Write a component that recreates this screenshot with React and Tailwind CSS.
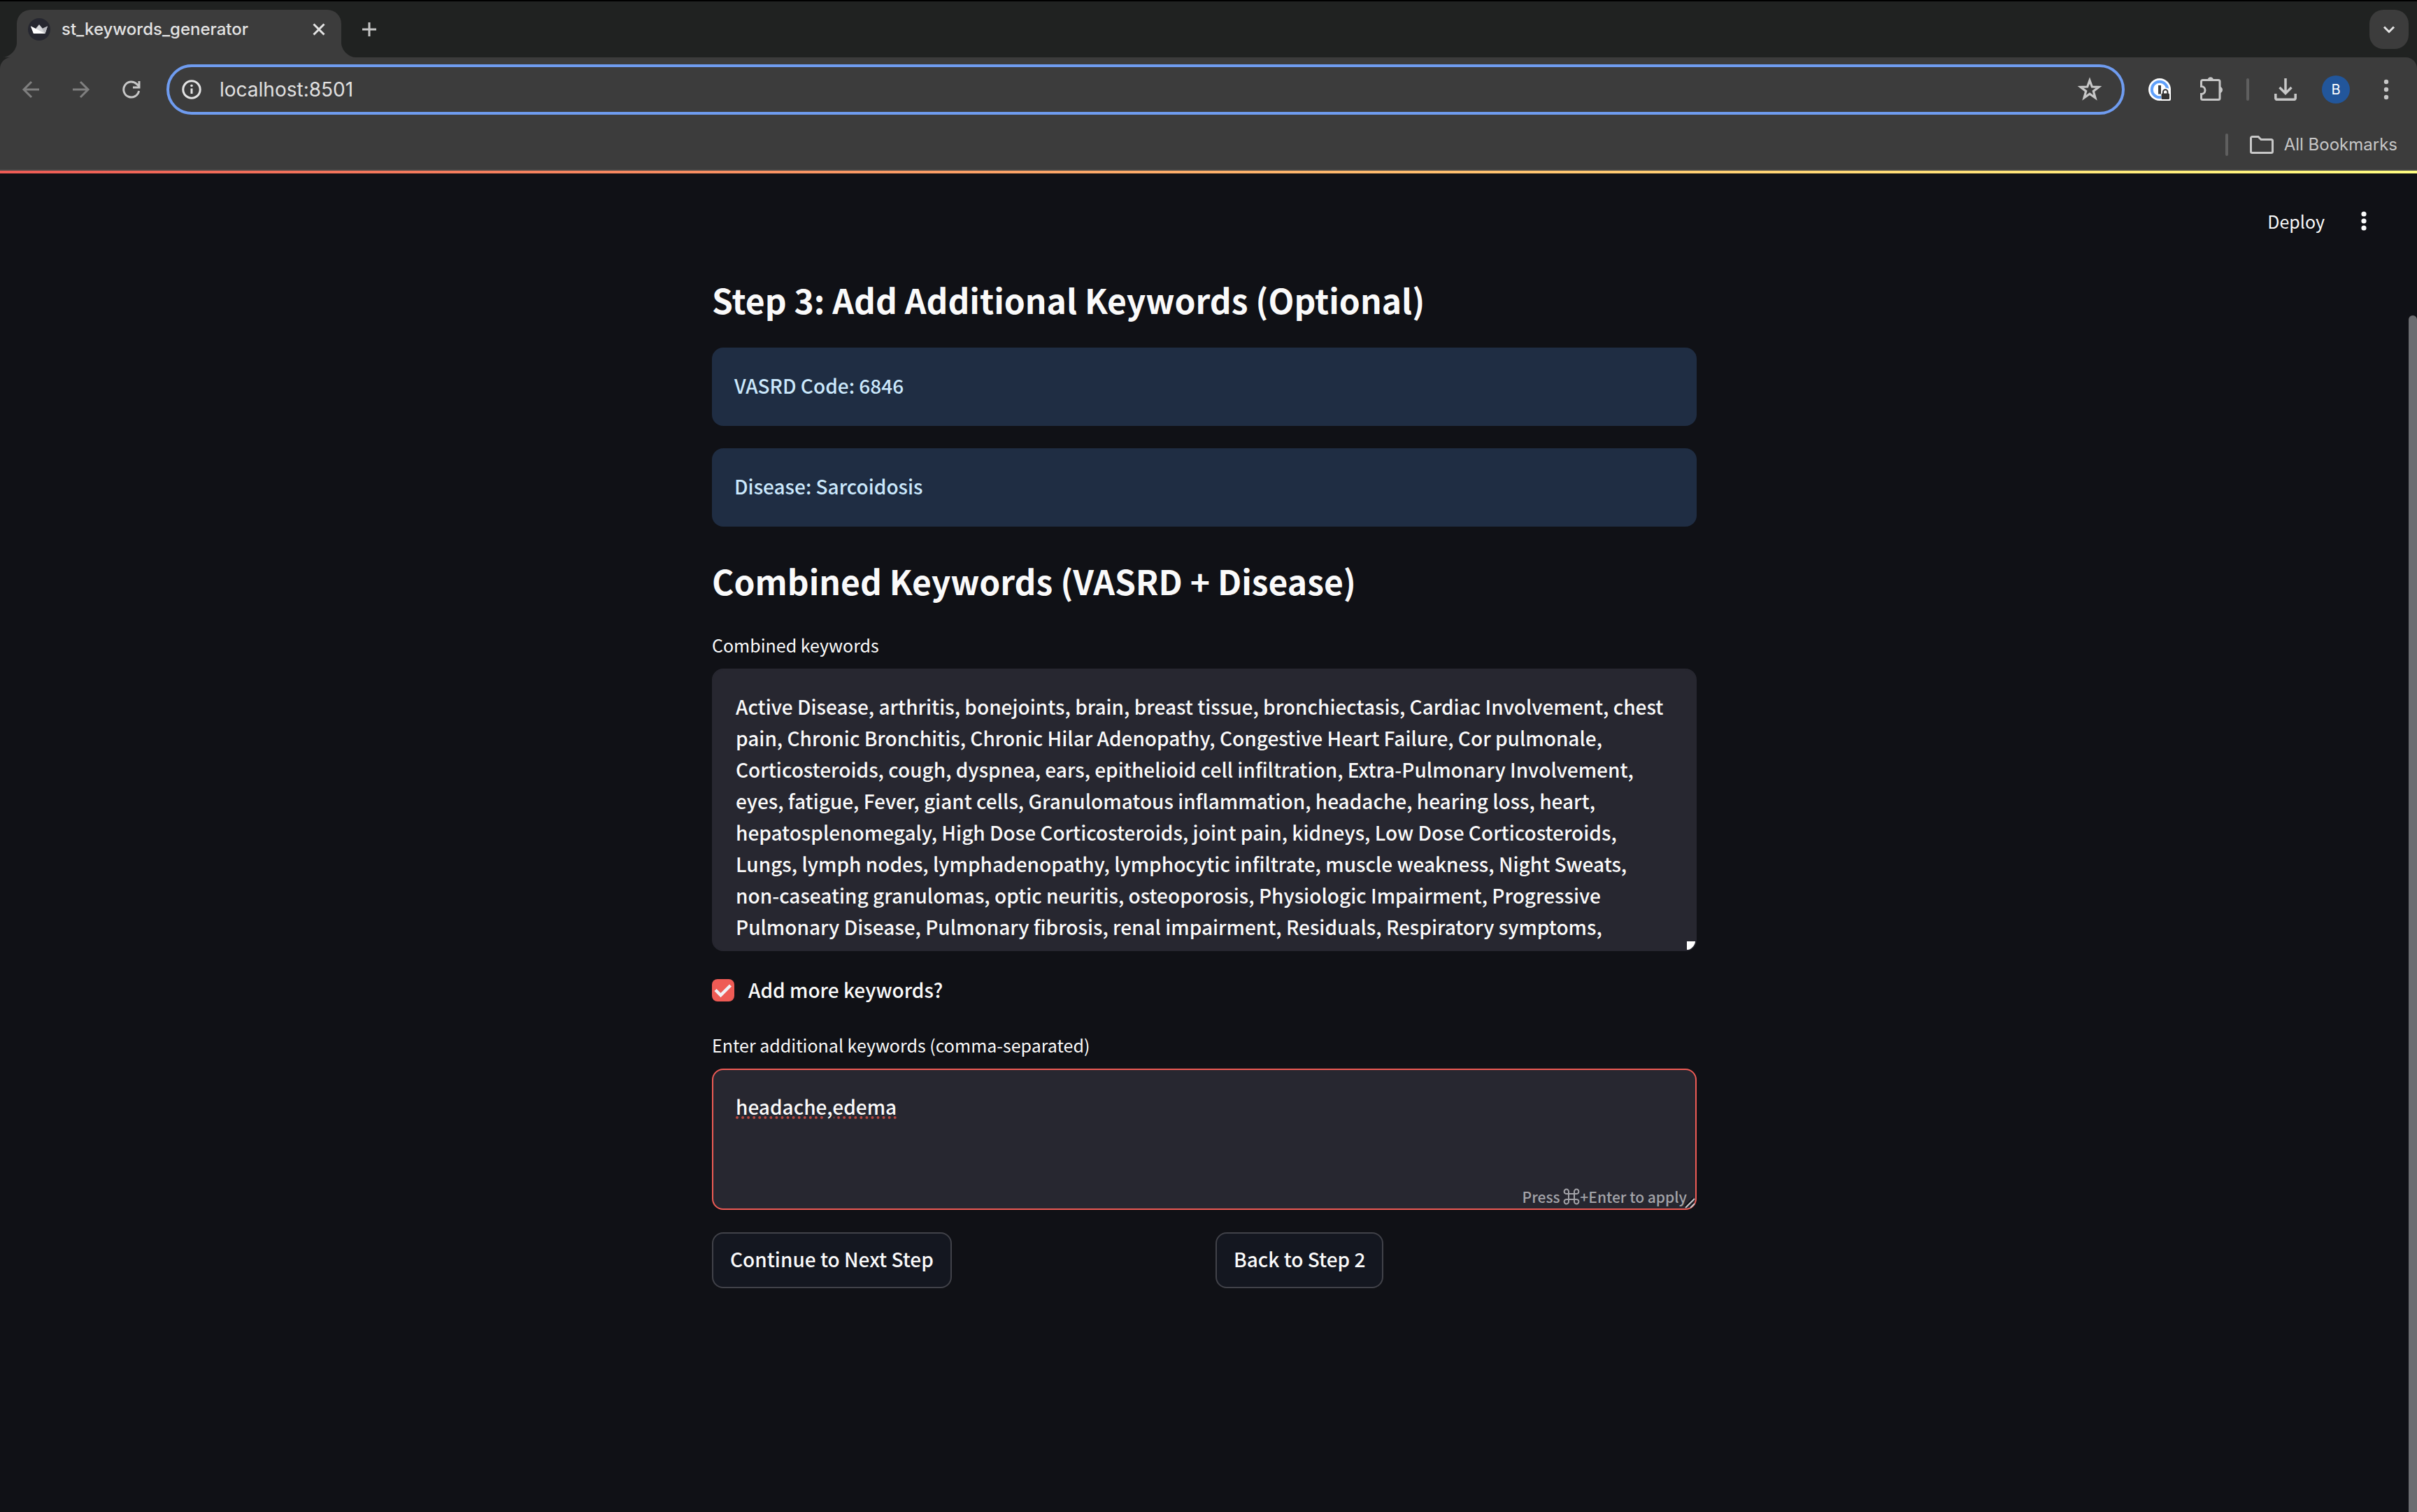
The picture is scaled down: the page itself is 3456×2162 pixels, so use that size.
import React from "react";

const KEYWORDS =
  "Active Disease, arthritis, bonejoints, brain, breast tissue, bronchiectasis, Cardiac Involvement, chest pain, Chronic Bronchitis, Chronic Hilar Adenopathy, Congestive Heart Failure, Cor pulmonale, Corticosteroids, cough, dyspnea, ears, epithelioid cell infiltration, Extra-Pulmonary Involvement, eyes, fatigue, Fever, giant cells, Granulomatous inflammation, headache, hearing loss, heart, hepatosplenomegaly, High Dose Corticosteroids, joint pain, kidneys, Low Dose Corticosteroids, Lungs, lymph nodes, lymphadenopathy, lymphocytic infiltrate, muscle weakness, Night Sweats, non-caseating granulomas, optic neuritis, osteoporosis, Physiologic Impairment, Progressive Pulmonary Disease, Pulmonary fibrosis, renal impairment, Residuals, Respiratory symptoms,";

function Icon({ size = "size-8", box = "0 0 32 32", children }) {
  return (
    <svg viewBox={box} className={`${size} block shrink-0`} fill="none" aria-hidden="true">
      {children}
    </svg>
  );
}

function CrownIcon() {
  return (
    <Icon>
      <circle cx="16" cy="16" r="16" fill="#262730" />
      <path d="M4 11.5 11 15 16 9 21 15 28 11.5 24.5 22H8Z" fill="#d5d6da" />
      <path d="M4 11.5 12 15.5 24.5 22H8Z" fill="#ffffff" />
      <path d="m28 11.5-8 3.5 4.5 7Z" fill="#b9babf" />
    </Icon>
  );
}

function BackIcon() {
  return (
    <Icon>
      <path d="M28 16H6M17 5 6 16l11 11" stroke="#7f7f7f" strokeWidth="3" />
    </Icon>
  );
}

function ForwardIcon() {
  return (
    <Icon>
      <path d="M4 16h22M15 5l11 11-11 11" stroke="#7f7f7f" strokeWidth="3" />
    </Icon>
  );
}

function ReloadIcon() {
  return (
    <Icon>
      <path d="M26.6 18A11 11 0 1 1 23.5 8.2L27 11.5" stroke="#c7c7c7" strokeWidth="3" />
      <path d="M27 4v9h-9" stroke="#c7c7c7" strokeWidth="3" />
    </Icon>
  );
}

function InfoIcon() {
  return (
    <Icon>
      <circle cx="16" cy="16" r="12.2" stroke="#e3e3e3" strokeWidth="3" />
      <path d="M16 14.5V22" stroke="#e3e3e3" strokeWidth="3" />
      <circle cx="16" cy="10.5" r="1.8" fill="#e3e3e3" />
    </Icon>
  );
}

function StarIcon() {
  return (
    <Icon size="size-9" box="0 0 36 36">
      <path
        d="m18 5 3.3 9 9.7.4-7.7 6 2.7 9.4-8-5.5-8 5.5 2.7-9.4-7.7-6 9.7-.4Z"
        stroke="#c7c7c7"
        strokeWidth="3.2"
      />
    </Icon>
  );
}

function PasswordIcon() {
  return (
    <Icon>
      <circle cx="16" cy="16" r="16" fill="#ffffff" />
      <circle cx="16" cy="16" r="11.2" stroke="#60a0fa" strokeWidth="4" />
      <rect x="14" y="10" width="4" height="12.5" fill="#3c3c3c" />
      <path d="M18 20.5a6 6 0 0 1 14 0V30a2 2 0 0 1-2 2H18Z" fill="#ffffff" />
      <rect x="18.5" y="21.5" width="11.5" height="8.5" rx="1.5" fill="#333333" />
      <path d="M21 22v-2.5a3.2 3.2 0 0 1 6.4 0V22" stroke="#333333" strokeWidth="2" />
    </Icon>
  );
}

function PuzzleIcon() {
  return (
    <Icon size="size-9" box="0 0 36 36">
      <path
        d="M3.500 6.500a2 2 0 0 1 2-2h22.500a2 2 0 0 1 2 2v24a2 2 0 0 1-2 2H5.500a2 2 0 0 1-2-2V24.500a5 5 0 0 0 0-11Z"
        stroke="#c7c7c7"
        strokeWidth="3"
      />
      <path d="M12.500 4.500a4.300 4.300 0 0 1 8.600 0ZM30 14a4 4.500 0 0 1 0 9Z" fill="#c7c7c7" />
    </Icon>
  );
}

function DownloadIcon() {
  return (
    <Icon>
      <path d="M16 0v21M7.500 13 16 21.500 24.500 13" stroke="#c7c7c7" strokeWidth="3.500" />
      <path d="M1.800 22v6.500a1.800 1.800 0 0 0 1.800 1.800h24.800a1.800 1.800 0 0 0 1.800-1.800V22" stroke="#c7c7c7" strokeWidth="3.500" />
    </Icon>
  );
}

function FolderIcon() {
  return (
    <Icon size="size-9" box="0 0 36 36">
      <path
        d="M2.500 8.500a2 2 0 0 1 2-2H13l4 4h14.500a2 2 0 0 1 2 2v15a2 2 0 0 1-2 2h-27a2 2 0 0 1-2-2Z"
        stroke="#c7c7c7"
        strokeWidth="3"
      />
    </Icon>
  );
}

function DotsIcon({ color, gap, r }) {
  return (
    <Icon>
      <circle cx="16" cy={16 - gap} r={r} fill={color} />
      <circle cx="16" cy="16" r={r} fill={color} />
      <circle cx="16" cy={16 + gap} r={r} fill={color} />
    </Icon>
  );
}

function TabStrip() {
  return (
    <div className="flex h-[82px] items-stretch border-t-2 border-black bg-[#202221] pr-3">
      <div className="flex w-6 items-end">
        <svg viewBox="0 0 24 24" className="block size-6" aria-hidden="true">
          <path d="M24 0v24H2A22 22 0 0 0 24 0Z" fill="#3c3c3c" />
        </svg>
      </div>
      <div className="mt-3 flex w-[464px] items-start rounded-t-[20px] bg-[#3c3c3c] pr-4 pl-4">
        <div className="flex h-14 w-full items-center">
          <CrownIcon />
          <span className="ml-4 flex-1 text-[24px] leading-8 font-medium text-[#e3e3e3]">st_keywords_generator</span>
          <button aria-label="Close tab">
            <Icon>
              <path d="m8.500 8.500 15 15m0-15-15 15" stroke="#e3e3e3" strokeWidth="3" />
            </Icon>
          </button>
        </div>
      </div>
      <div className="flex w-6 items-end">
        <svg viewBox="0 0 24 24" className="block size-6" aria-hidden="true">
          <path d="M0 0v24h22A22 22 0 0 1 0 0Z" fill="#3c3c3c" />
        </svg>
      </div>
      <div className="mt-3 flex h-14 flex-1 items-center justify-between">
        <button aria-label="New tab">
          <Icon>
            <path d="M16 6v20M6 16h20" stroke="#c7c7c7" strokeWidth="3" />
          </Icon>
        </button>
        <button aria-label="Search tabs" className="grid size-14 place-items-center rounded-[20px] bg-[#3c3c3c]">
          <Icon>
            <path d="m9 12.500 7 7 7-7" stroke="#e3e3e3" strokeWidth="3" />
          </Icon>
        </button>
      </div>
    </div>
  );
}

function Toolbar() {
  return (
    <div className="bg-[#202221]">
      <div className="flex h-[82px] items-center rounded-t-2xl bg-[#3c3c3c] pt-2.5 pr-7 pl-7">
        <div className="flex gap-10">
          <button aria-label="Back"><BackIcon /></button>
          <button aria-label="Forward"><ForwardIcon /></button>
          <button aria-label="Reload"><ReloadIcon /></button>
        </div>
        <div className="ml-[34px] flex h-[72px] flex-1 items-center rounded-full border-4 border-[#6f9cf0] pr-7 pl-4">
          <button aria-label="Site information"><InfoIcon /></button>
          <input
            aria-label="Address"
            defaultValue="localhost:8501"
            className="ml-6 min-w-0 flex-1 bg-transparent text-[28px] leading-9 text-[#e0e0e0] outline-none"
          />
          <button aria-label="Bookmark this page"><StarIcon /></button>
        </div>
        <div className="ml-[34px] flex items-center">
          <button aria-label="Password manager"><PasswordIcon /></button>
          <button aria-label="Extensions" className="ml-10"><PuzzleIcon /></button>
          <div className="ml-8 h-8 w-1 rounded-full bg-[#5f5f5f]" />
          <button aria-label="Downloads" className="ml-9"><DownloadIcon /></button>
          <button
            aria-label="Profile"
            className="ml-9 grid size-10 place-items-center rounded-full bg-[#22569b] text-[20px] leading-6 text-white"
          >
            B
          </button>
          <button aria-label="Browser menu" className="ml-9"><DotsIcon color="#c7c7c7" gap={11} r={3.2} /></button>
        </div>
      </div>
      <div className="flex h-20 items-center justify-end border-b-2 border-[#474747] bg-[#3c3c3c] pt-2 pr-7">
        <div className="h-8 w-1 rounded-full bg-[#5f5f5f]" />
        <button className="ml-[30px] flex items-center gap-3.5 text-[24px] leading-8 text-[#c7c7c7]">
          <FolderIcon />
          All Bookmarks
        </button>
      </div>
    </div>
  );
}

function Notice({ children }) {
  return (
    <div className="rounded-2xl bg-[#1f2d43] px-8 pt-8 pb-9 text-[28px] leading-[44px] font-medium text-[#cbe8fc]">
      {children}
    </div>
  );
}

function StepButton({ children }) {
  return (
    <button className="flex h-20 items-start rounded-2xl border-2 border-[#414249] bg-[#141720] px-6 pt-3.5 text-[28px] leading-[44px] font-medium text-[#fafafa]">
      {children}
    </button>
  );
}

function StepForm() {
  return (
    <form className="mx-auto w-full max-w-[1408px] pt-2.5" onSubmit={(e) => e.preventDefault()}>
      <h2 className="text-[48px] leading-[68px] font-bold">Step 3: Add Additional Keywords (Optional)</h2>
      <div className="mt-[35px] flex flex-col gap-8">
        <Notice>VASRD Code: 6846</Notice>
        <Notice>Disease: Sarcoidosis</Notice>
      </div>
      <h2 className="mt-[43px] text-[48px] leading-[68px] font-bold">Combined Keywords (VASRD + Disease)</h2>

      <label htmlFor="combined" className="mt-10 block text-[25px] leading-9">
        Combined keywords
      </label>
      <div className="relative mt-4">
        <textarea
          id="combined"
          spellCheck={false}
          defaultValue={KEYWORDS}
          className="block h-[404px] w-full resize-none overflow-hidden rounded-2xl border-2 border-[#272730] bg-[#272730] px-8 pt-[30px] pb-8 text-[28px] leading-[45px] font-medium outline-none"
        />
        <svg viewBox="0 0 12 12" className="absolute right-0.5 bottom-0.5 block size-3" aria-hidden="true">
          <path d="M0 0h12c0 5-5 11-10 12H0Z" fill="#ffffff" />
        </svg>
      </div>

      <div className="mt-[34px] flex items-start">
        <div className="relative my-1.5 size-8">
          <input
            id="more"
            type="checkbox"
            defaultChecked
            className="block size-8 appearance-none rounded-lg bg-[#ee5b55]"
          />
          <svg viewBox="0 0 32 32" className="pointer-events-none absolute inset-0 size-8" fill="none" aria-hidden="true">
            <path d="m5 15.500 7.500 7.500L26.500 9" stroke="#f0f2f6" strokeWidth="4.500" />
          </svg>
        </div>
        <label htmlFor="more" className="ml-5 text-[28px] leading-[42px] font-medium">
          Add more keywords?
        </label>
      </div>

      <label htmlFor="extra" className="mt-[38px] block text-[25px] leading-9">
        Enter additional keywords (comma-separated)
      </label>
      <div className="relative mt-4">
        <textarea
          id="extra"
          spellCheck={false}
          defaultValue="headache,edema"
          className="block h-[202px] w-full resize-none overflow-hidden rounded-2xl border-2 border-[#ee5b55] bg-[#272730] px-8 pt-[30px] pb-8 text-[28px] leading-[45px] font-medium underline decoration-[#b8483f] decoration-dotted decoration-4 underline-offset-2 outline-none"
        />
        <div className="absolute right-3.5 bottom-0.5 flex items-center text-[21px] leading-[34px] font-medium text-[#a3a3a8]">
          Press&nbsp;
          <svg viewBox="0 0 24 24" className="block size-6" fill="none" aria-hidden="true">
            <path
              d="M8 8h8v8H8ZM8 8H5a3.200 3.200 0 1 1 3-3ZM16 8V5a3.200 3.200 0 1 1 3 3ZM16 16h3a3.200 3.200 0 1 1-3 3ZM8 16v3a3.200 3.200 0 1 1-3-3Z"
              stroke="#a3a3a8"
              strokeWidth="2"
            />
          </svg>
          +Enter to apply
        </div>
        <svg viewBox="0 0 16 16" className="absolute right-0.5 bottom-0.5 block size-4" fill="none" aria-hidden="true">
          <path d="M1 13 13 1M8 14l6-6" stroke="#101116" strokeWidth="2" />
          <path d="M2 15 15 2M9 15l6-6" stroke="#c9c9cc" strokeWidth="2" />
        </svg>
      </div>

      <div className="mt-8 grid grid-cols-2 gap-8">
        <div>
          <StepButton>Continue to Next Step</StepButton>
        </div>
        <div>
          <StepButton>Back to Step 2</StepButton>
        </div>
      </div>
    </form>
  );
}

export default function App() {
  return (
    <div className="flex min-h-screen flex-col bg-[#101116] font-['Inter',sans-serif]">
      <TabStrip />
      <Toolbar />
      <div className="h-1 bg-gradient-to-r from-[#ee5b55] to-[#fffd80]" />
      <div className="flex flex-1 font-['Noto_Sans_CJK_SC',sans-serif] text-[#fafafa]">
        <main className="flex-1">
          <header className="flex h-[136px] items-center justify-end pr-12">
            <button className="text-[25px] leading-[40px]">Deploy</button>
            <button aria-label="Main menu" className="ml-10">
              <DotsIcon color="#fafafa" gap={10} r={3.6} />
            </button>
          </header>
          <StepForm />
        </main>
        <div className="flex w-3 pt-[203px]">
          <div className="w-3 rounded-t-full bg-[#6b6c70]" />
        </div>
      </div>
    </div>
  );
}
